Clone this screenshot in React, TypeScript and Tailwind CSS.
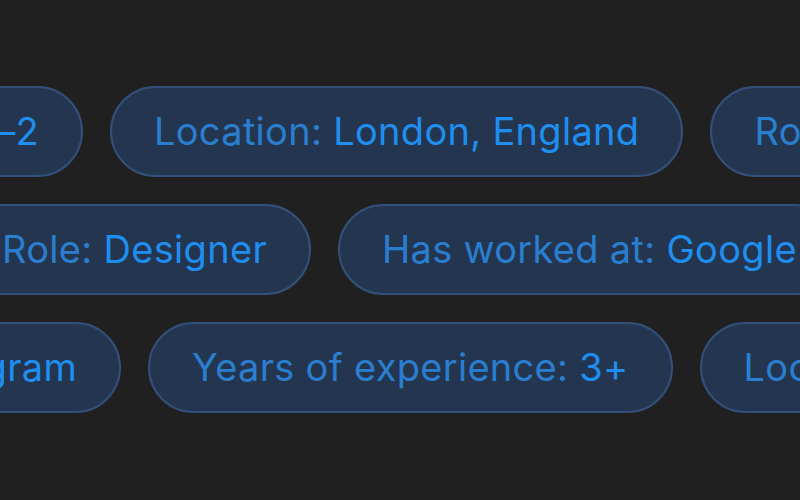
const rows = [
  {
    lead: 83,
    pills: [
      ["Years of experience:", "1–2"],
      ["Location:", "London, England"],
      ["Role:", "Engineer"],
    ],
  },
  {
    lead: 311,
    pills: [
      ["Role:", "Designer"],
      ["Has worked at:", "Google"],
    ],
  },
  {
    lead: 121,
    pills: [
      ["Has worked at:", "Instagram"],
      ["Years of experience:", "3+"],
      ["Location:", "London, England"],
    ],
  },
];

function Pill({ label, value }: { label: string; value: string }) {
  return (
    <div className="shrink-0 h-[91px] flex items-center px-[42px] rounded-full bg-[#24364f] border-2 border-[#33507a] whitespace-nowrap text-[38px] tracking-[0.3px]">
      <span className="text-[#2a7ed0]">{label}</span>
      <span className="text-[#1e8ef0] ml-[11px]">{value}</span>
    </div>
  );
}

export default function App() {
  return (
    <div
      className="w-[800px] h-[500px] bg-[#202020] overflow-hidden flex flex-col pt-[86px] gap-[27px]"
      style={{ fontFamily: "Inter, 'Noto Sans', sans-serif" }}
    >
      {rows.map((row, i) => (
        <div key={i} className="flex gap-[27px]">
          {/* first pill hangs off the left edge */}
          <div className="shrink-0 flex justify-end" style={{ width: row.lead }}>
            <Pill label={row.pills[0][0]} value={row.pills[0][1]} />
          </div>
          {row.pills.slice(1).map(([l, v]) => (
            <Pill key={l} label={l} value={v} />
          ))}
        </div>
      ))}
    </div>
  );
}
